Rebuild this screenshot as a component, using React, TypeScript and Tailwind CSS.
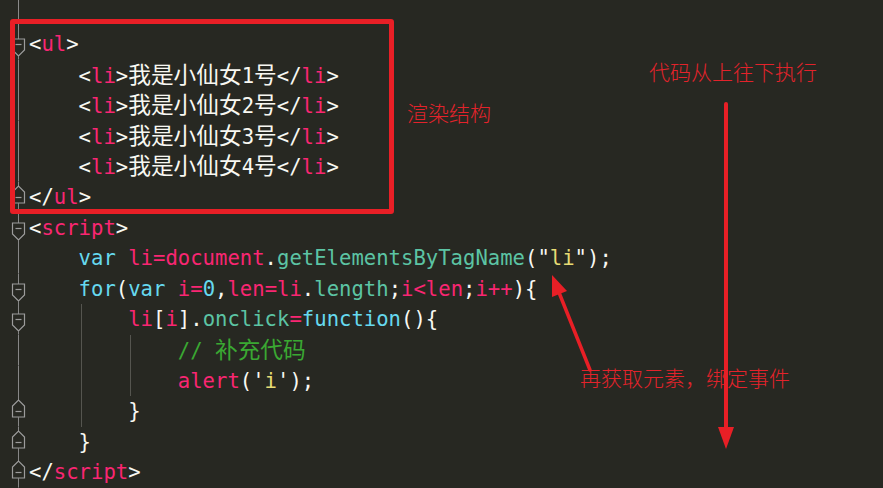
type Tok = [string, string, boolean?]
type Line = { fold?: 'open' | 'close'; level: number; guides?: number[]; t: Tok[] }

const W = '#f8f8f2'
const P = '#f92672'
const C = '#66d9ef'
const T = '#5cc4a4'
const Y = '#e6db74'
const G = '#3aa832'

const li = (n: string): Tok[] => [
  [W, '<'], [P, 'li'], [W, '>'], [W, '我是小仙女', true], [W, n], [W, '号', true], [W, '</'], [P, 'li'], [W, '>'],
]

const lines: Line[] = [
  { fold: 'open', level: 0, t: [[W, '<'], [P, 'ul'], [W, '>']] },
  { level: 1, t: li('1') },
  { level: 1, t: li('2') },
  { level: 1, t: li('3') },
  { level: 1, t: li('4') },
  { fold: 'close', level: 0, t: [[W, '</'], [P, 'ul'], [W, '>']] },
  { fold: 'open', level: 0, t: [[W, '<'], [P, 'script'], [W, '>']] },
  {
    level: 1,
    t: [[C, 'var'], [W, ' '], [P, 'li=document'], [W, '.'], [T, 'getElementsByTagName'], [W, '("'], [Y, 'li'], [W, '");']],
  },
  {
    fold: 'open',
    level: 1,
    t: [
      [C, 'for'], [W, '('], [C, 'var'], [W, ' '], [P, 'i='], [C, '0'], [W, ','], [P, 'len=li'], [W, '.'], [T, 'length'],
      [W, ';'], [P, 'i<len'], [W, ';'], [P, 'i++'], [W, '){'],
    ],
  },
  {
    fold: 'open',
    level: 2,
    guides: [1],
    t: [[P, 'li'], [W, '['], [P, 'i'], [W, ']'], [W, '.'], [T, 'onclick'], [P, '='], [C, 'function'], [W, '(){']],
  },
  { level: 3, guides: [1, 2], t: [[G, '// '], [G, '补充代码', true]] },
  { level: 3, guides: [1, 2], t: [[P, 'alert'], [W, "('"], [Y, 'i'], [W, "');"]] },
  { fold: 'close', level: 2, guides: [1], t: [[W, '}']] },
  { fold: 'close', level: 1, t: [[W, '}']] },
  { fold: 'close', level: 0, t: [[W, '</'], [P, 'script'], [W, '>']] },
]

function Gutter({ fold, h }: { fold?: 'open' | 'close'; h: number }) {
  const stroke = '#9c9c9c'
  return (
    <svg width="29" height={h} viewBox={`0 0 29 ${h}`} className="shrink-0 block">
      {!fold && <line x1="18.5" y1="0" x2="18.5" y2={h} stroke="#8a8a8a" strokeWidth="1" />}
      {fold === 'open' && (
        <>
          <line x1="18.5" y1="0" x2="18.5" y2="10" stroke="#8a8a8a" strokeWidth="1" />
          <path d="M12.5 10 H24.5 V21 L18.5 27 L12.5 21 Z" fill="none" stroke={stroke} strokeWidth="1.2" />
          <path d="M15.5 15.5 H21.5" stroke={stroke} strokeWidth="1.2" />
          <line x1="18.5" y1="27" x2="18.5" y2={h} stroke="#8a8a8a" strokeWidth="1" />
        </>
      )}
      {fold === 'close' && (
        <>
          <line x1="18.5" y1="0" x2="18.5" y2="4" stroke="#8a8a8a" strokeWidth="1" />
          <path d="M12.5 21 H24.5 V10 L18.5 4 L12.5 10 Z" fill="none" stroke={stroke} strokeWidth="1.2" />
          <path d="M15.5 15.5 H21.5" stroke={stroke} strokeWidth="1.2" />
          <line x1="18.5" y1="21" x2="18.5" y2={h} stroke="#8a8a8a" strokeWidth="1" />
        </>
      )}
    </svg>
  )
}

function CodeLine({ line }: { line: Line }) {
  const segs = Array.from({ length: line.level }, (_, i) => i)
  return (
    <div className="flex h-[30.6px]">
      <Gutter fold={line.fold} h={30.6} />
      {segs.map((i) => (
        <div key={i} className="w-[4ch] shrink-0 pl-[2px]">
          {line.guides?.includes(i) && <div className="h-full w-px bg-[#55554f]" />}
        </div>
      ))}
      <div className="whitespace-pre leading-[30.6px]">
        {line.t.map(([color, text, cjk], i) => (
          <span key={i} style={{ color }} className={cjk ? 'text-[22.7px]' : undefined}>
            {text}
          </span>
        ))}
      </div>
    </div>
  )
}

export default function App() {
  return (
    <div className="relative h-[488px] w-[883px] overflow-hidden bg-[#272822] font-['DejaVu_Sans_Mono','Noto_Sans_CJK_SC',monospace] text-[20.6px]">
      <div className="flex h-[29px]">
        <Gutter h={29} />
      </div>
      {lines.map((line, i) => (
        <CodeLine key={i} line={line} />
      ))}

      {/* annotations drawn over the editor */}
      <div className="pointer-events-none absolute left-[10px] top-[19px] h-[195px] w-[384px] rounded-[3px] border-[5px] border-[#e81f26]" />
      <div className="absolute left-[407px] top-[102px] font-['Noto_Sans_CJK_SC',sans-serif] text-[21px] font-light leading-none text-[#e3232b]">
        渲染结构
      </div>
      <div className="absolute left-[649px] top-[61px] font-['Noto_Sans_CJK_SC',sans-serif] text-[21px] font-light leading-none text-[#e3232b]">
        代码从上往下执行
      </div>
      <div className="absolute left-[580px] top-[367px] font-['Noto_Sans_CJK_SC',sans-serif] text-[21px] font-light leading-none text-[#e3232b]">
        再获取元素，绑定事件
      </div>
      <svg className="pointer-events-none absolute inset-0" width="883" height="488">
        <line x1="726" y1="104" x2="726" y2="432" stroke="#e81f26" strokeWidth="4" strokeLinecap="round" />
        <polygon points="718,427 734,427 726,449" fill="#e81f26" />
        <line x1="590" y1="370" x2="558" y2="290" stroke="#e81f26" strokeWidth="3.5" strokeLinecap="round" />
        <polygon points="552,275 567,291 552,297" fill="#e81f26" />
      </svg>
    </div>
  )
}
